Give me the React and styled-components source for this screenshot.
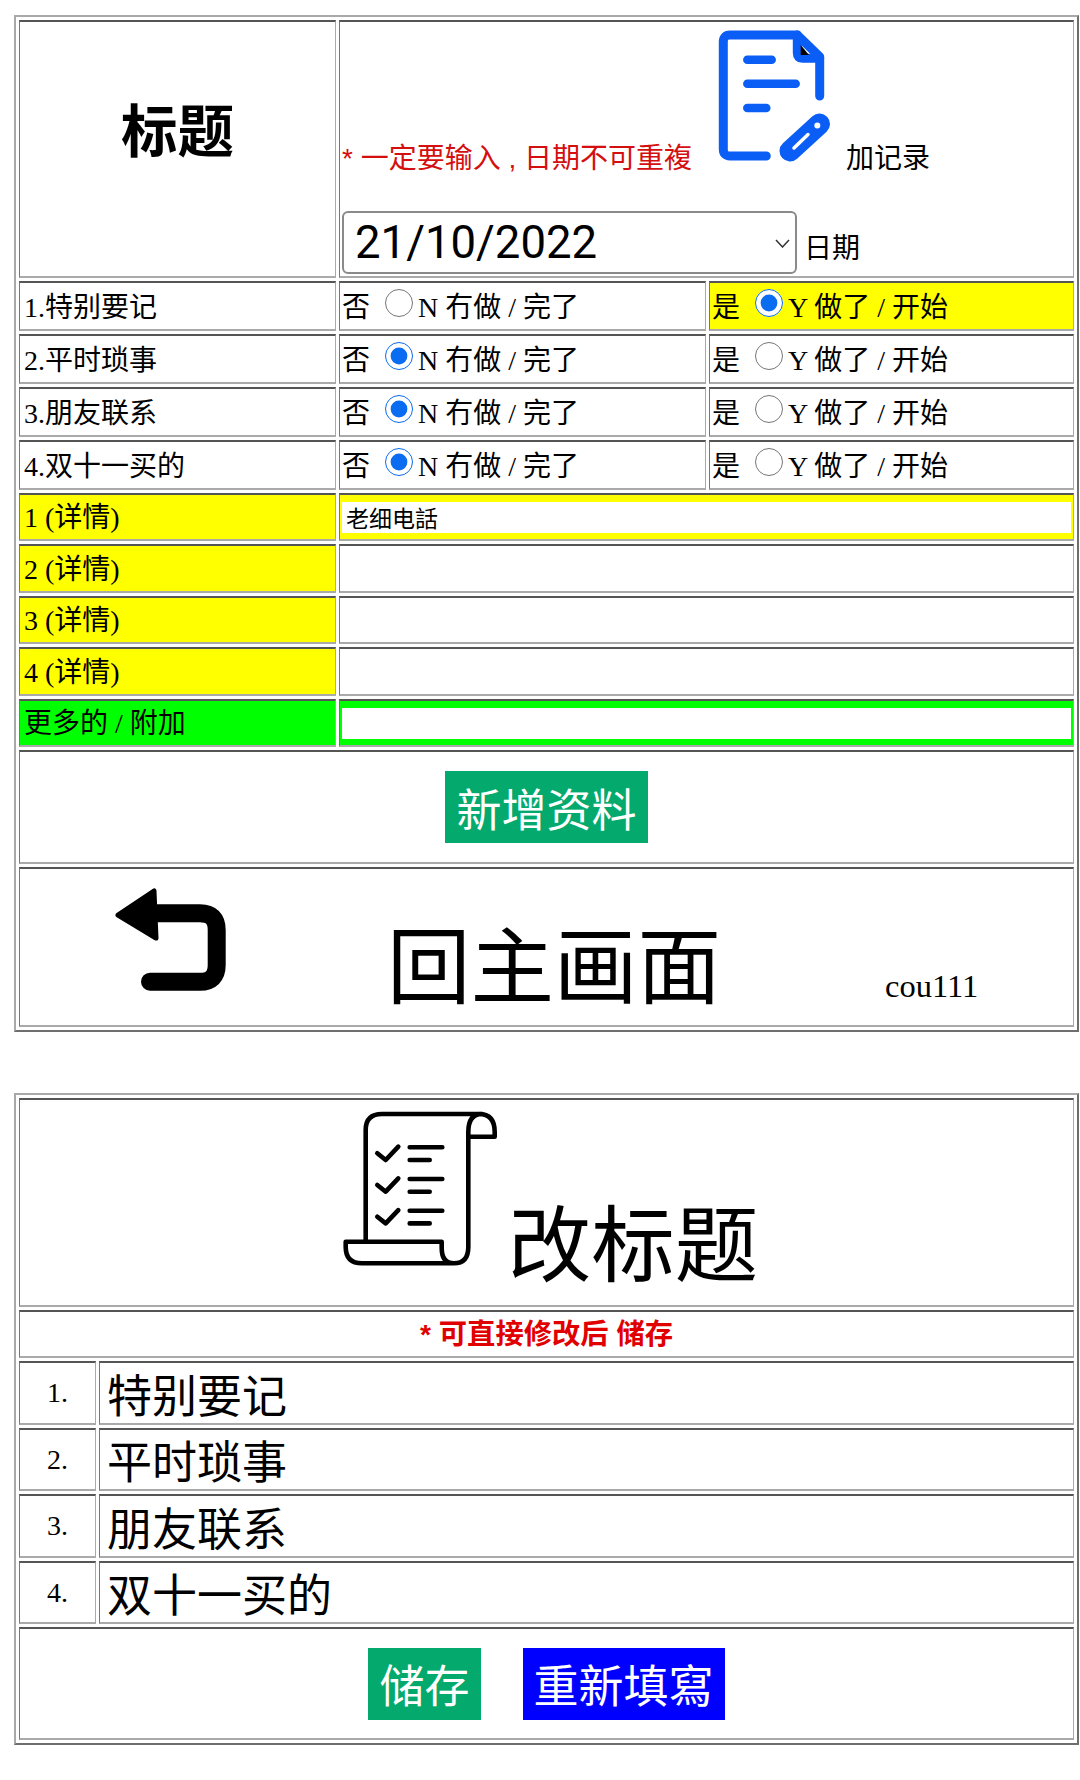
import React from "react";
import styled, { createGlobalStyle } from "styled-components";

const CJK = `"Noto Sans CJK SC", sans-serif`;
const SERIF_CJK = `"Liberation Serif", "Noto Sans CJK SC", serif`;
const SANS_CJK = `"Liberation Sans", "Noto Sans CJK SC", sans-serif`;

const GlobalStyle = createGlobalStyle`
	html, body {
		margin: 0;
		padding: 0;
		background: #fff;
		overflow-x: hidden;
	}
	body {
		width: 1080px;
		color: #000;
		font-family: ${SERIF_CJK};
		font-size: 28px;
	}
`;

const Page = styled.div`
	padding: 15px 0 0 14px;
`;

const Table = styled.table`
	table-layout: fixed;
	width: 1065px;
	border-collapse: separate;
	border-spacing: 3px;
	border-width: 2px;
	border-style: solid;
	border-color: #a9a9a9 #6e6e6e #6e6e6e #a9a9a9;
	margin-bottom: ${(p) => p.$gap || 0}px;
`;

const Cell = styled.td`
	box-sizing: border-box;
	height: ${(p) => p.$h}px;
	padding: ${(p) => p.$nudge || 0}px 2px 0 ${(p) => (p.$label ? 4 : 2)}px;
	border-width: 2px 1px;
	border-style: solid;
	border-color: #555 #aaa #aaa #777;
	background: ${(p) => p.$bg || "#fff"};
	vertical-align: ${(p) => (p.$top ? "top" : "middle")};
	line-height: 1.2;
`;

const HeadingCell = styled(Cell)`
	padding: 0 2px 42px;
	text-align: center;
	font-family: ${CJK};
	font-size: 56.5px;
	font-weight: 700;
`;

const NoteLine = styled.div`
	display: flex;
	align-items: flex-end;
	padding-top: 7px;
	font-family: ${SANS_CJK};
`;

const RedNote = styled.span`
	color: #d40f0f;
	white-space: pre;
`;

const DocIcon = styled.svg`
	display: block;
	flex: none;
	width: 114px;
	height: 133px;
	margin: 0 15px 14px 25px;
`;

const DateLine = styled.div`
	display: flex;
	align-items: flex-end;
	margin-top: 35px;
	font-family: ${SANS_CJK};
`;

const DateField = styled.div`
	position: relative;
	flex: none;
	width: 455px;
	height: 63px;
	margin-right: 7px;
`;

const DateSelect = styled.select`
	display: block;
	box-sizing: border-box;
	width: 100%;
	height: 100%;
	padding: 0 0 0 11px;
	border: 2px solid #8a8a8a;
	border-radius: 6px;
	background: #fff;
	color: #000;
	font-family: Roboto, sans-serif;
	font-size: 45.5px;
	appearance: none;
`;

const DateLabel = styled.span`
	margin-bottom: 8px;
`;

const Chevron = styled.svg`
	position: absolute;
	top: 28px;
	right: 7px;
	width: 15px;
	height: 9px;
	pointer-events: none;
`;

const Choice = styled.label`
	display: flex;
	align-items: flex-start;
	white-space: pre;
`;

const Radio = styled.input.attrs({ type: "radio" })`
	flex: none;
	width: 28px;
	height: 28px;
	margin: -2px 5px 0 15px;
	accent-color: #0a6cf0;
`;

const DetailInput = styled.input`
	display: block;
	box-sizing: border-box;
	width: 100%;
	height: 31px;
	padding: 0 4px;
	border: 0;
	outline: 0;
	background: #fff;
	color: #000;
	font-family: ${SANS_CJK};
	font-size: 23px;
`;

const ButtonCell = styled(Cell)`
	text-align: center;
`;

const SolidButton = styled.button`
	box-sizing: border-box;
	height: 72px;
	margin: 0 ${(p) => p.$space || 0}px;
	padding: 0 11px;
	border: 0;
	background: ${(p) => p.$bg || "#04aa6d"};
	color: #fff;
	font-family: ${CJK};
	font-size: 45px;
	vertical-align: middle;
`;

const HomeLink = styled.a`
	display: flex;
	align-items: flex-start;
	color: #000;
	text-decoration: none;
`;

const BackIcon = styled.svg`
	display: block;
	flex: none;
	width: 130px;
	height: 125px;
	margin: 1px 0 0 78px;
`;

const BigText = styled.span`
	flex: none;
	margin-top: ${(p) => p.$top || 0}px;
	margin-left: ${(p) => p.$left || 0}px;
	font-family: ${CJK};
	font-size: 83.5px;
	line-height: 1;
`;

const UserName = styled.span`
	flex: none;
	margin: 98px 0 0 164px;
	font-family: "Liberation Serif", serif;
	font-size: 32.5px;
	line-height: 1.2;
`;

const TitleRow = styled.div`
	display: flex;
	justify-content: center;
	align-items: flex-start;
	padding-left: 8px;
`;

const ScrollIcon = styled.svg`
	display: block;
	flex: none;
	width: 155px;
	height: 155px;
	margin: 11px 10px 0 0;
`;

const BoldNote = styled.div`
	text-align: center;
	color: #e00000;
	font-family: ${SANS_CJK};
	font-size: 28.3px;
	font-weight: 700;
	white-space: pre;
`;

const NumCell = styled(Cell)`
	text-align: center;
`;

const NameInput = styled.input`
	display: block;
	box-sizing: border-box;
	width: 100%;
	height: 58px;
	padding: 0 5px;
	border: 0;
	outline: 0;
	background: transparent;
	color: #000;
	font-family: ${SANS_CJK};
	font-size: 45px;
`;

const tasks = [
	{ label: "1.特别要记", name: "特别要记", done: true },
	{ label: "2.平时琐事", name: "平时琐事", done: false },
	{ label: "3.朋友联系", name: "朋友联系", done: false },
	{ label: "4.双十一买的", name: "双十一买的", done: false },
];

const details = [
	{ label: "1 (详情)", value: "老细电話", bg: "#ffff00", h: 48 },
	{ label: "2 (详情)", value: "", h: 49 },
	{ label: "3 (详情)", value: "", h: 48 },
	{ label: "4 (详情)", value: "", h: 49 },
];

const DocumentPencil = () => (
	<DocIcon viewBox="0 0 114 133" fill="none" stroke="#0b5ef5" strokeWidth="9" strokeLinecap="round" strokeLinejoin="round">
		<path d="M102.7 67V27.7L80.3 6H13Q6.3 6 6.3 13V120Q6.3 127 13 127H49.3" />
		<path d="M80.3 6V24Q80.3 29.3 85.5 29.3H102.7" />
		<path d="M83.7 16 92 26H83.7Z" fill="#000" stroke="none" />
		<path d="M30.3 30.7H54.7M30.3 54.7H78.7M30.3 79H49.3" strokeWidth="8.5" />
		<path d="M73 122 102.5 95" strokeWidth="21" />
		<path d="M77 119 91 105.5" stroke="#fff" strokeWidth="3.5" />
		<circle cx="100.3" cy="96.5" r="3" fill="#fff" stroke="none" />
	</DocIcon>
);

const BackArrow = () => (
	<BackIcon viewBox="0 0 130 125" fill="none" stroke="#000" strokeWidth="18" strokeLinecap="round">
		<path d="M50 111.7H100Q116.7 111.7 116.7 95V60Q116.7 43.3 100 43.3H50" />
		<path d="M18 45 54 21 56 68Z" fill="#000" strokeWidth="5" strokeLinejoin="round" />
	</BackIcon>
);

const ChecklistScroll = () => (
	<ScrollIcon viewBox="14 11 155 155" fill="none" stroke="#000" strokeWidth="4.6" strokeLinecap="round" strokeLinejoin="round">
		<path d="M36.7 140V30Q36.7 14 53 14H150Q165.7 14 165.7 32V36.7H139.3V32Q139.3 14 153 14" />
		<path d="M139.3 36V147Q139.3 163.3 125 163.3H33Q16.7 163.3 16.7 147V141.7H112.7V148Q112.7 163.3 125 163.3" />
		{[0, 31.7, 63.4].map((dy) => (
			<path key={dy} transform={`translate(0 ${dy})`} d="M48.3 53.3 56.7 60 69.3 46.7M80.7 47.3H113.3M80.7 60H100.7" />
		))}
	</ScrollIcon>
);

export default function App() {
	return (
		<Page>
			<GlobalStyle />
			<Table $gap={61}>
				<colgroup>
					<col style={{ width: 317 }} />
					<col style={{ width: 367 }} />
					<col style={{ width: 365 }} />
				</colgroup>
				<tbody>
					<tr>
						<HeadingCell $h={258}>标题</HeadingCell>
						<Cell $h={258} $top colSpan={2}>
							<NoteLine>
								<RedNote>* 一定要输入 , 日期不可重複</RedNote>
								<DocumentPencil />
								<span>加记录</span>
							</NoteLine>
							<DateLine>
								<DateField>
									<DateSelect defaultValue="2022-10-21">
										<option value="2022-10-21">21/10/2022</option>
									</DateSelect>
									<Chevron viewBox="0 0 15 9" fill="none" stroke="#333" strokeWidth="1.5">
										<path d="M1 1 7.5 8 14 1" />
									</Chevron>
								</DateField>
								<DateLabel>日期</DateLabel>
							</DateLine>
						</Cell>
					</tr>
					{tasks.map((t) => (
						<tr key={t.label}>
							<Cell $h={50} $label $nudge={4}>{t.label}</Cell>
							<Cell $h={50} $nudge={4}>
								<Choice>
									否<Radio name={t.name} defaultChecked={!t.done} />N 冇做 / 完了
								</Choice>
							</Cell>
							<Cell $h={50} $nudge={4} $bg={t.done ? "#ffff00" : undefined}>
								<Choice>
									是<Radio name={t.name} defaultChecked={t.done} />Y 做了 / 开始
								</Choice>
							</Cell>
						</tr>
					))}
					{details.map((d) => (
						<tr key={d.label}>
							<Cell $h={d.h} $label $nudge={2} $bg="#ffff00">{d.label}</Cell>
							<Cell $h={d.h} $bg={d.bg} colSpan={2}>
								<DetailInput defaultValue={d.value} />
							</Cell>
						</tr>
					))}
					<tr>
						<Cell $h={48} $label $nudge={2} $bg="#00ff00">更多的 / 附加</Cell>
						<Cell $h={48} $bg="#00ff00" colSpan={2}>
							<DetailInput />
						</Cell>
					</tr>
					<tr>
						<ButtonCell $h={114} colSpan={3}>
							<SolidButton>新增资料</SolidButton>
						</ButtonCell>
					</tr>
					<tr>
						<Cell $h={160} $top colSpan={3}>
							<HomeLink href="#">
								<BackArrow />
								<BigText $top={50} $left={157}>回主画面</BigText>
								<UserName>cou111</UserName>
							</HomeLink>
						</Cell>
					</tr>
				</tbody>
			</Table>
			<Table>
				<colgroup>
					<col style={{ width: 77 }} />
					<col />
				</colgroup>
				<tbody>
					<tr>
						<Cell $h={209} $top colSpan={2}>
							<TitleRow>
								<ChecklistScroll />
								<BigText $top={97}>改标题</BigText>
							</TitleRow>
						</Cell>
					</tr>
					<tr>
						<Cell $h={48} $nudge={2} colSpan={2}>
							<BoldNote>* 可直接修改后 储存</BoldNote>
						</Cell>
					</tr>
					{tasks.map((t, i) => (
						<tr key={t.name}>
							<NumCell $h={i % 2 ? 63 : 64}>{i + 1}.</NumCell>
							<Cell $h={i % 2 ? 63 : 64}>
								<NameInput defaultValue={t.name} />
							</Cell>
						</tr>
					))}
					<tr>
						<ButtonCell $h={113} colSpan={2}>
							<SolidButton $space={21}>储存</SolidButton>
							<SolidButton $bg="#0000ff" $space={21}>重新填寫</SolidButton>
						</ButtonCell>
					</tr>
				</tbody>
			</Table>
		</Page>
	);
}
